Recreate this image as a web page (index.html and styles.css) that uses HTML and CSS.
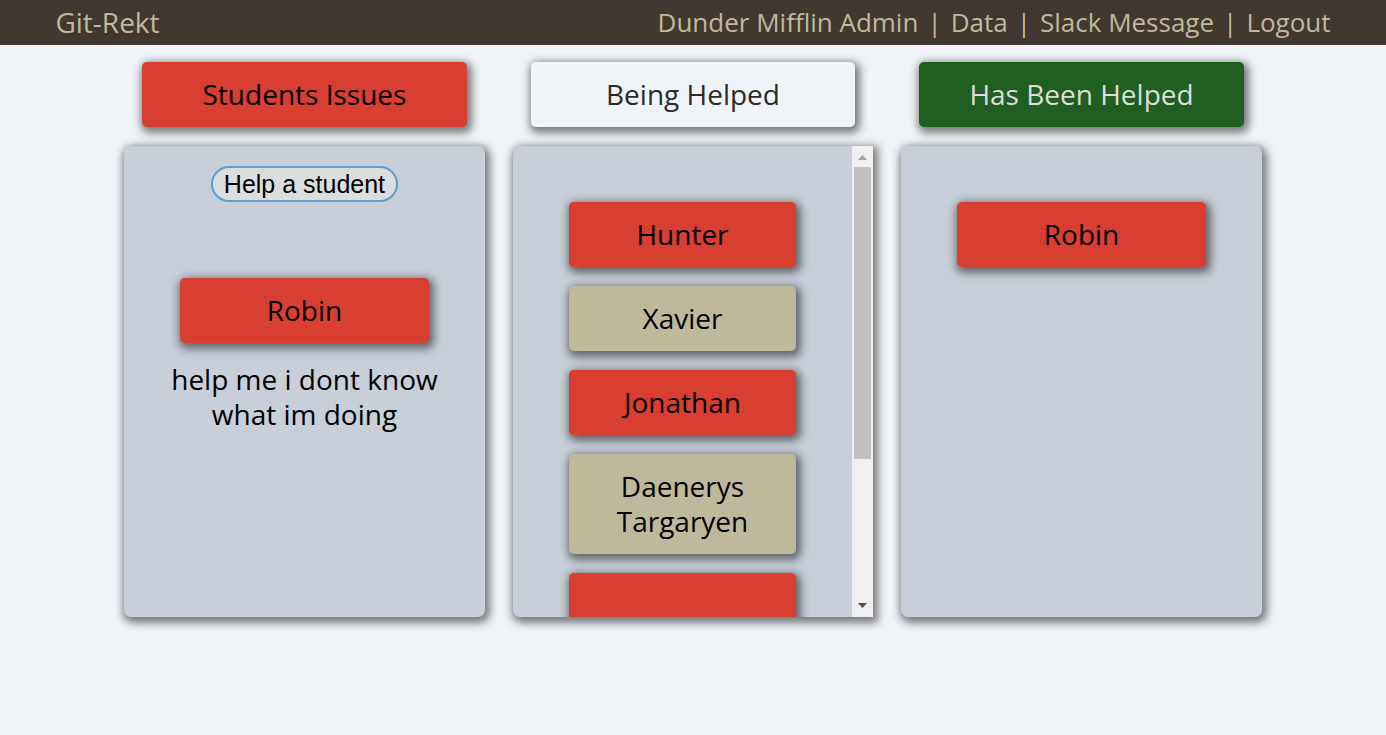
FILE: index.html
```html
<!DOCTYPE html>
<html lang="en">
<head>
<meta charset="utf-8">
<title>Git-Rekt</title>
<meta name="viewport" content="width=device-width, initial-scale=1">
<link rel="stylesheet" href="styles.css">
</head>
<body>
<header class="navbar">
  <a class="navbar-link" href="#">Git-Rekt</a>
  <nav class="navbar-menu">
    <a class="navbar-link" href="#">Dunder Mifflin Admin</a>
    <span>|</span>
    <a class="navbar-link" href="#">Data</a>
    <span>|</span>
    <a class="navbar-link" href="#">Slack Message</a>
    <span>|</span>
    <a class="navbar-link" href="#">Logout</a>
  </nav>
</header>
<main class="board">
  <section class="column">
    <h2 class="card card-red">Students Issues</h2>
    <div class="panel">
      <div class="panel-list">
        <button class="help-button" type="button">Help a student</button>
        <div class="card card-red">Robin</div>
        <p class="issue">help me i dont know what im doing</p>
      </div>
    </div>
  </section>
  <section class="column">
    <h2 class="card card-light">Being Helped</h2>
    <div class="panel panel-scrolling">
      <div class="panel-list panel-list-offset">
        <div class="card card-red">Hunter</div>
        <div class="card card-tan">Xavier</div>
        <div class="card card-red">Jonathan</div>
        <div class="card card-tan">Daenerys Targaryen</div>
        <div class="card card-red card-blank"></div>
      </div>
      <div class="scrollbar" aria-hidden="true">
        <svg class="scrollbar-arrow" viewBox="0 0 21 21"><path d="M6 14 L10.500 9 L15 14 Z" fill="#a3a3a3"/></svg>
        <div class="scrollbar-track"><div class="scrollbar-thumb"></div></div>
        <svg class="scrollbar-arrow" viewBox="0 0 21 21"><path d="M6 7 L15 7 L10.500 12 Z" fill="#505050"/></svg>
      </div>
    </div>
  </section>
  <section class="column">
    <h2 class="card card-green">Has Been Helped</h2>
    <div class="panel">
      <div class="panel-list panel-list-offset">
        <div class="card card-red">Robin</div>
      </div>
    </div>
  </section>
</main>
</body>
</html>
```
FILE: styles.css
```css
* {
  box-sizing: border-box;
}

body {
  min-height: 100vh;
  margin: 0;
  background: #f0f4f8;
  color: #000;
  font-family: "Trebuchet MS", "Open Sans", sans-serif;
  font-size: 28px;
  line-height: 35px;
}

.navbar {
  display: flex;
  justify-content: space-between;
  padding: 5px 4%;
  background: #403831;
  color: #c0b99c;
}

.navbar-menu {
  display: flex;
  gap: 9px;
  font-size: 26px;
}

.navbar-link {
  color: inherit;
  text-decoration: none;
}

.board {
  display: grid;
  grid-template-columns: repeat(3, 1fr);
  gap: 2vw;
  width: 82.1%;
  margin: 0 auto;
  padding: 17px 0 20px;
}

.column {
  display: flex;
  flex-direction: column;
  gap: 19px;
  min-width: 0;
}

.card {
  flex: none;
  margin: 0 18px;
  padding: 15px;
  border-radius: 5px;
  box-shadow: 2px 3px 9px 3px rgba(0, 0, 0, 0.5);
  font-size: inherit;
  font-weight: normal;
  text-align: center;
}

.card-red {
  background: #d83e31;
}

.card-tan {
  background: #bfb99c;
}

.card-light {
  background: #f0f4f8;
  color: #2e2a26;
}

.card-green {
  background: #215f21;
  color: #ddd;
}

.card-blank {
  min-height: 65px;
}

.panel {
  display: flex;
  height: 64vh;
  min-height: 471px;
  overflow: hidden;
  border-radius: 7px;
  background: #c8cfd9;
  box-shadow: 2px 3px 9px 3px rgba(0, 0, 0, 0.5);
}

.panel-scrolling {
  border-radius: 7px 0 0 7px;
}

.panel-list {
  display: flex;
  flex: 1;
  flex-direction: column;
  gap: 19px;
  min-width: 0;
  padding: 20px 38px;
  overflow-y: auto;
  scrollbar-width: none;
}

.panel-list-offset {
  padding-top: 56px;
}

.help-button {
  flex: none;
  align-self: center;
  height: 36px;
  margin-bottom: 57px;
  padding: 0 11px;
  border: 2px solid #5a9fd4;
  border-radius: 18px;
  background: #ddd;
  color: #000;
  font-family: "Liberation Sans", Arial, sans-serif;
  font-size: 25px;
  line-height: 28px;
}

.issue {
  margin: 0;
  text-align: center;
}

.scrollbar {
  display: flex;
  flex: none;
  flex-direction: column;
  width: 21px;
  background: #f0f0f0;
}

.scrollbar-arrow {
  display: block;
  width: 21px;
  height: 21px;
}

.scrollbar-track {
  flex: 1;
  padding: 0 2px;
}

.scrollbar-thumb {
  height: 68%;
  background: #c1c1c1;
}
```
